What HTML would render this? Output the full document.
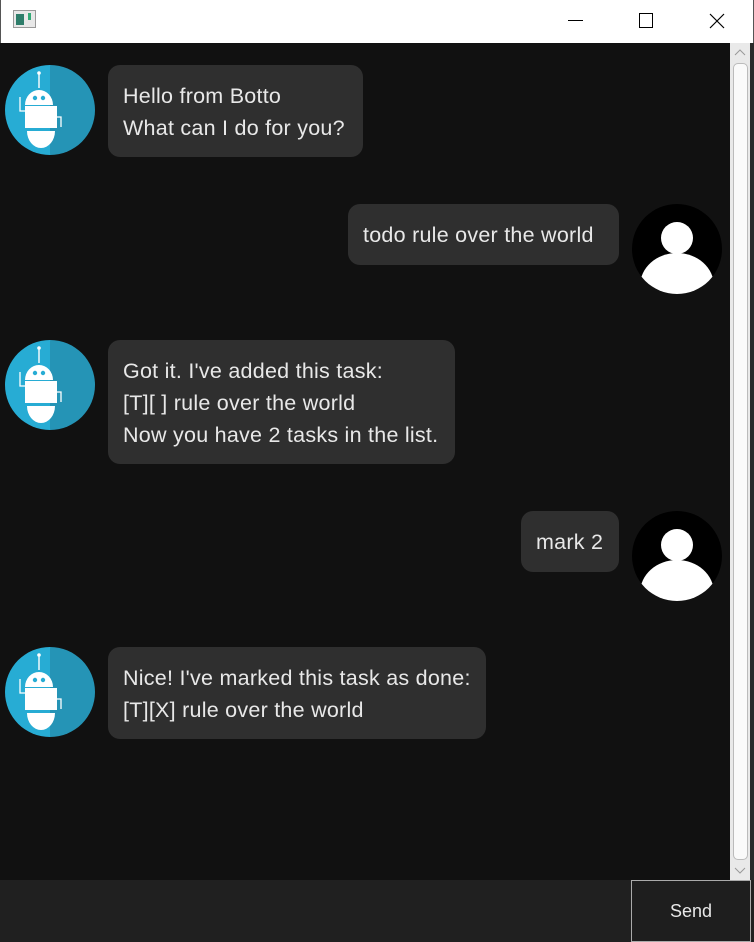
<!DOCTYPE html>
<html><head><style>
*{margin:0;padding:0;box-sizing:border-box}
body{width:754px;height:942px;background:#111;position:relative;overflow:hidden;font-family:"Liberation Sans","DejaVu Sans",sans-serif}
.title{position:absolute;left:0;top:0;width:754px;height:43px;background:#fff;border-left:1px solid #555;border-right:1px solid #555}
.b{position:absolute;background:#2f2f2f;border-radius:12px;color:#e8e8e8;font-size:21.5px;line-height:32px;padding:15px 15px 13px;white-space:nowrap;letter-spacing:0.25px}
.av{position:absolute;width:90px;height:90px;border-radius:50%;overflow:hidden}
.bot{background:linear-gradient(90deg,#27acd4 50%,#2594b6 50%)}
.user{background:#000}
</style></head><body>
<div class="title">
<svg style="position:absolute;left:12px;top:10px" width="24" height="20"><rect x="0.5" y="0.5" width="22" height="17" fill="#e8e8e8" stroke="#999"/><rect x="3" y="4" width="8" height="11" fill="#2e7d6a"/><rect x="15" y="3" width="3" height="7" fill="#3a7"/></svg>
<div style="position:absolute;left:567px;top:20px;width:15px;height:1px;background:#000"></div>
<div style="position:absolute;left:638px;top:13px;width:14px;height:15px;border:1px solid #000"></div>
<svg style="position:absolute;left:708px;top:13px" width="16" height="16"><path d="M1 1L15 15M15 1L1 15" stroke="#000" stroke-width="1.2"/></svg>
</div>
<div style="position:absolute;left:750px;top:43px;width:4px;height:837px;background:#2a2a2a"></div>
<div style="position:absolute;left:730px;top:43px;width:20px;height:837px;background:#e9e9e9"></div>
<svg style="position:absolute;left:733px;top:48px" width="14" height="10"><path d="M2 7L7 2L12 7" stroke="#999" fill="none"/></svg>
<div style="position:absolute;left:733px;top:63px;width:15px;height:797px;background:#fafafa;border:1px solid #bbb;border-radius:5px"></div>
<svg style="position:absolute;left:733px;top:866px" width="14" height="10"><path d="M2 2L7 7L12 2" stroke="#999" fill="none"/></svg>

<svg width="0" height="0" style="position:absolute"><defs>
<symbol id="robot" viewBox="0 0 90 90"><circle cx="34" cy="8" r="1.8" fill="#fff"/><rect x="33.3" y="9" width="1.4" height="14" fill="#fff"/><path d="M20 40a14 15 0 0 1 28 0z" fill="#fff"/><circle cx="30" cy="33" r="2.2" fill="#27acd4"/><circle cx="38" cy="33" r="2.2" fill="#27acd4"/><rect x="20" y="41" width="32" height="22" fill="#fff"/><path d="M20 46H15V32" stroke="#fff" stroke-width="1.3" fill="none"/><path d="M52 52H56V62" stroke="#fff" stroke-width="1.3" fill="none"/><path d="M22 66h28a14 17 0 0 1 -28 0z" fill="#fff"/></symbol>
<symbol id="person" viewBox="0 0 90 90"><circle cx="45" cy="34" r="16" fill="#fff"/><path d="M8 82a37 33 0 0 1 74 0a40 40 0 0 1 -74 0z" fill="#fff"/></symbol>
</defs></svg>

<div class="av bot" style="left:5px;top:65px"><svg width="90" height="90"><use href="#robot"/></svg></div>
<div class="b" style="left:108px;top:65px;width:255px">Hello from Botto<br>What can I do for you?</div>

<div class="b" style="left:348px;top:204px;width:271px;height:61px">todo rule over the world</div>
<div class="av user" style="left:632px;top:204px"><svg width="90" height="90"><use href="#person"/></svg></div>

<div class="av bot" style="left:5px;top:340px"><svg width="90" height="90"><use href="#robot"/></svg></div>
<div class="b" style="left:108px;top:340px;width:347px">Got it. I've added this task:<br>[T][ ] rule over the world<br>Now you have 2 tasks in the list.</div>

<div class="b" style="left:521px;top:511px;width:98px;height:61px">mark 2</div>
<div class="av user" style="left:632px;top:511px"><svg width="90" height="90"><use href="#person"/></svg></div>

<div class="av bot" style="left:5px;top:647px"><svg width="90" height="90"><use href="#robot"/></svg></div>
<div class="b" style="left:108px;top:647px;width:378px">Nice! I've marked this task as done:<br>[T][X] rule over the world</div>

<div style="position:absolute;left:0;top:880px;width:631px;height:62px;background:#202020"></div>
<div style="position:absolute;left:631px;top:880px;width:120px;height:62px;background:#1e1e1e;border:1px solid #aaa;color:#e8e8e8;font-size:18px;text-align:center;line-height:60px">Send</div>
<div style="position:absolute;left:751px;top:880px;width:3px;height:62px;background:#202020"></div>
</body></html>
